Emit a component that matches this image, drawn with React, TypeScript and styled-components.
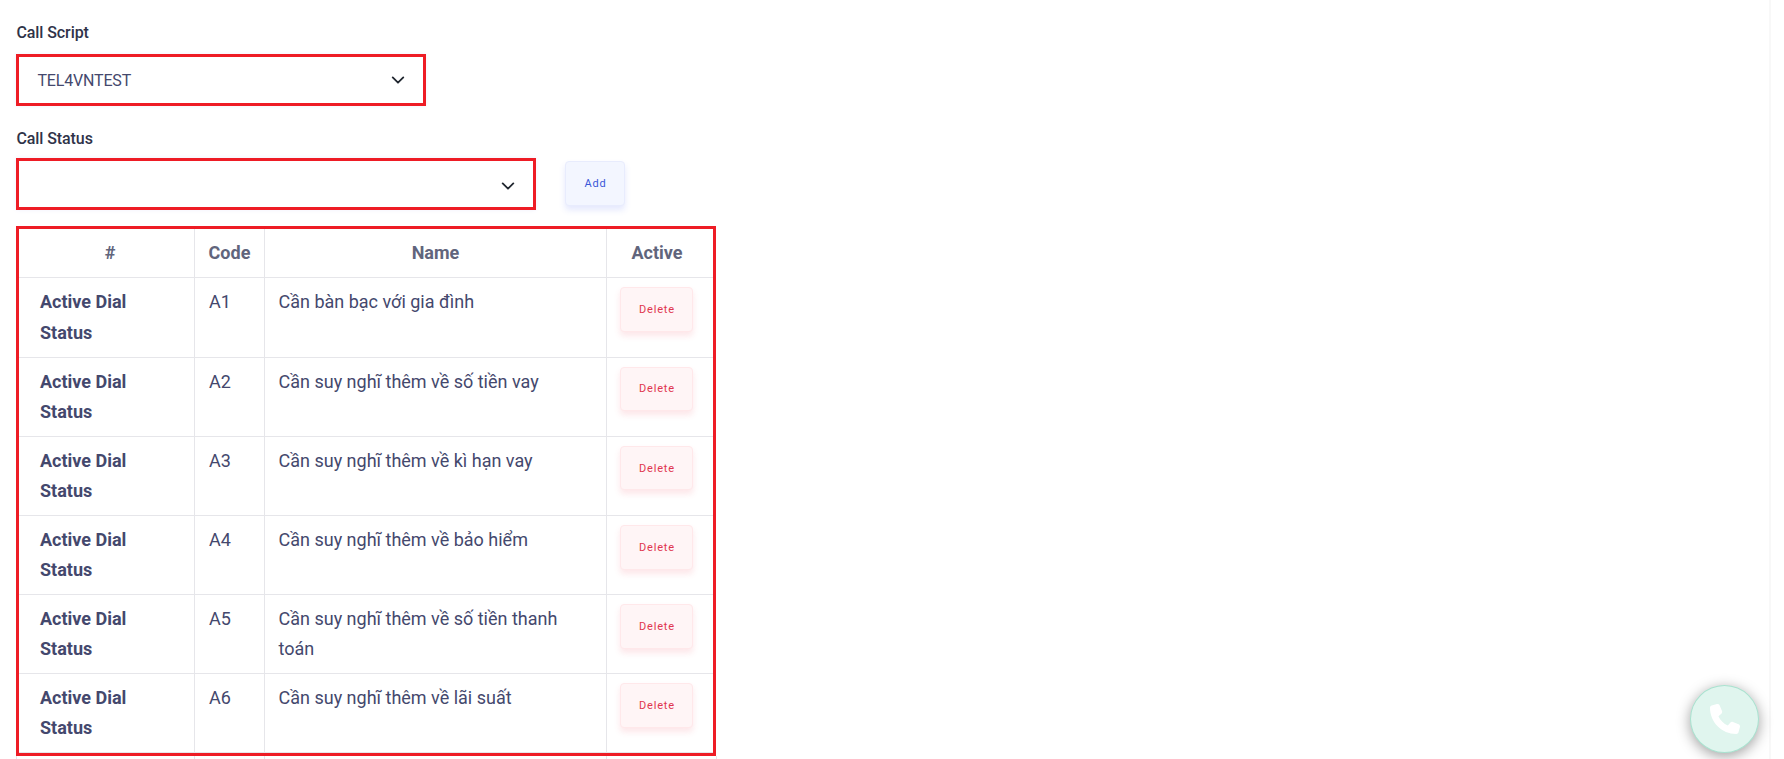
import React from 'react';
import styled, { createGlobalStyle } from 'styled-components';

const GlobalStyle = createGlobalStyle`
  *, *::before, *::after { box-sizing: border-box; }
  html, body { margin: 0; height: 100%; overflow: hidden; background: #fff; }
  body { font-family: Roboto, "Liberation Sans", sans-serif; color: #44486d; }
`;

const Page = styled.div`
  display: flex;
  height: 759px;
  overflow: hidden;
`;

const Content = styled.main`
  flex: 0 0 1769px;
  padding: 22px 16px 0;
`;

const Gutter = styled.aside`
  flex: 1;
  border-left: 2px solid #f8f8f8;
`;

const Label = styled.div`
  height: 32px;
  padding-left: 0.4px;
  font-size: 16px;
  line-height: 22px;
  font-weight: 500;
  letter-spacing: -0.08px;
  color: #2f3349;
`;

const StatusLabel = styled(Label)`
  height: 52px;
  padding-top: 22px;
`;

const Select = styled.button<{ $width: number; $drop?: number }>`
  display: flex;
  align-items: center;
  justify-content: space-between;
  width: ${(p) => p.$width}px;
  height: 52px;
  padding: ${(p) => p.$drop ?? 0}px 18px 0 18.5px;
  border: 3px solid #ee1c25;
  background: #fff;
  box-shadow: 0 0 4px rgba(120, 110, 240, 0.1);
  color: #44486d;
  font: 400 16px/24px Roboto, sans-serif;
`;

const SelectValue = styled.span`
  padding-top: 2px;
  letter-spacing: -0.18px;
`;

const Chevron = styled.svg`
  display: block;
  width: 14px;
  height: 14px;
  margin-left: auto;
`;

const StatusLine = styled.div`
  display: flex;
  align-items: flex-start;
  gap: 29px;
  height: 68px;
`;

const tones = {
  blue: { bg: '#f3f6ff', line: '#e8ecfd', text: '#3a57d8', glow: 'rgba(90, 115, 240, 0.16)' },
  red: { bg: '#fff5f6', line: '#ffe8ea', text: '#e0354f', glow: 'rgba(240, 80, 100, 0.14)' },
};

const SoftButton = styled.button<{ $tone: 'blue' | 'red'; $width: number; $height?: number; $top?: number }>`
  display: flex;
  align-items: flex-start;
  justify-content: center;
  width: ${(p) => p.$width}px;
  height: ${(p) => p.$height ?? 45}px;
  padding: ${(p) => p.$top ?? 14}px 0 0 1px;
  border: 1px solid ${(p) => tones[p.$tone].line};
  border-radius: 4px;
  background: ${(p) => tones[p.$tone].bg};
  box-shadow: 0 4px 6px ${(p) => tones[p.$tone].glow};
  color: ${(p) => tones[p.$tone].text};
  font: 400 11px/16px Roboto, sans-serif;
  letter-spacing: 0.8px;
`;

const AddSlot = styled.div`
  padding-top: 3px;
`;

const TableFrame = styled.div`
  width: 700px;
  border: 3px solid #ee1c25;
`;

const Row = styled.div<{ $height: number }>`
  display: grid;
  grid-template-columns: 176px 70px 342px 106px;
  height: ${(p) => p.$height}px;
  border-bottom: 1px solid #e6e6ea;
`;

const Cell = styled.div<{ $indent?: number }>`
  padding: 9px 14px 0 ${(p) => p.$indent ?? 14}px;
  border-right: 1px solid #e6e6ea;
  font-size: 18px;
  line-height: 30.4px;
  font-weight: 400;
  color: #44486d;
  &:last-child { border-right: 0; }
`;

const TitleCell = styled(Cell)<{ $roomy: boolean }>`
  padding: ${(p) => (p.$roomy ? 8 : 9)}px 14px 0 21px;
  line-height: ${(p) => (p.$roomy ? 31 : 30.4)}px;
  font-weight: 700;
`;

const HeadCell = styled(Cell)`
  padding: 9px 0 0 0;
  text-align: center;
  font-weight: 700;
  color: #61657c;
  &:first-child { padding-left: 7px; }
  &:last-child { padding-right: 6px; }
`;

const ActionCell = styled(Cell)`
  padding: 9px 0 0 13px;
`;

const NextRow = styled.div`
  display: grid;
  grid-template-columns: 178px 70px 342px 110px;
  width: 701px;
  height: 3px;
  border-left: 1px solid #e6e6ea;
`;

const NextCell = styled.div`
  border-right: 1px solid #e6e6ea;
`;

const CallButton = styled.button`
  position: fixed;
  left: 1690px;
  top: 685px;
  display: flex;
  align-items: center;
  justify-content: center;
  width: 69px;
  height: 68px;
  padding: 0;
  border: 1px solid #a9e3d0;
  border-radius: 50%;
  background: #e0f5ee;
  box-shadow: 0 3px 14px rgba(0, 0, 0, 0.38);
`;

const PhoneIcon = styled.svg`
  width: 30px;
  height: 30px;
  fill: #fff;
`;

const rows = [
  { code: 'A1', name: 'Cần bàn bạc với gia đình', height: 80, button: 45, top: 14 },
  { code: 'A2', name: 'Cần suy nghĩ thêm về số tiền vay', height: 79, button: 44, top: 13 },
  { code: 'A3', name: 'Cần suy nghĩ thêm về kì hạn vay', height: 79, button: 44, top: 14 },
  { code: 'A4', name: 'Cần suy nghĩ thêm về bảo hiểm', height: 79, button: 45, top: 14 },
  { code: 'A5', name: 'Cần suy nghĩ thêm về số tiền thanh toán', height: 79, button: 45, top: 14 },
  { code: 'A6', name: 'Cần suy nghĩ thêm về lãi suất', height: 79, button: 45, top: 14 },
];

const Arrow = () => (
  <Chevron viewBox="0 0 14 14" fill="none" stroke="#20262f" strokeWidth="1.8" strokeLinecap="round" strokeLinejoin="round">
    <path d="M1.7 4.4 7 9.7l5.3-5.3" />
  </Chevron>
);

export default function App() {
  return (
    <>
      <GlobalStyle />
      <Page>
        <Content>
          <Label>Call Script</Label>
          <Select $width={410}>
            <SelectValue>TEL4VNTEST</SelectValue>
            <Arrow />
          </Select>
          <StatusLabel>Call Status</StatusLabel>
          <StatusLine>
            <Select $width={520} $drop={3}><Arrow /></Select>
            <AddSlot><SoftButton $tone="blue" $width={60}>Add</SoftButton></AddSlot>
          </StatusLine>
          <TableFrame>
            <Row $height={49}>
              <HeadCell>#</HeadCell>
              <HeadCell>Code</HeadCell>
              <HeadCell>Name</HeadCell>
              <HeadCell>Active</HeadCell>
            </Row>
            {rows.map((row) => (
              <Row key={row.code} $height={row.height}>
                <TitleCell $roomy={row.height === 80}>Active Dial<br />Status</TitleCell>
                <Cell>{row.code}</Cell>
                <Cell $indent={13.5}>{row.name}</Cell>
                <ActionCell>
                  <SoftButton $tone="red" $width={73} $height={row.button} $top={row.top}>Delete</SoftButton>
                </ActionCell>
              </Row>
            ))}
          </TableFrame>
          <NextRow>
            <NextCell />
            <NextCell />
            <NextCell />
            <NextCell />
          </NextRow>
        </Content>
        <Gutter />
      </Page>
      <CallButton aria-label="Call">
        <PhoneIcon viewBox="0 0 512 512">
          <path d="M164.900 24.600c-7.700-18.600-28-28.500-47.400-23.200l-88 24C12.100 30.200 0 46 0 64c0 247.400 200.600 448 448 448 18 0 33.800-12.100 38.600-29.500l24-88c5.300-19.400-4.600-39.700-23.200-47.400l-96-40c-16.300-6.800-35.200-2.100-46.300 11.600L304.700 368C234.300 334.700 177.300 277.700 144 207.300l49.300-40.300c13.700-11.200 18.400-30 11.600-46.300l-40-96z" />
        </PhoneIcon>
      </CallButton>
    </>
  );
}
